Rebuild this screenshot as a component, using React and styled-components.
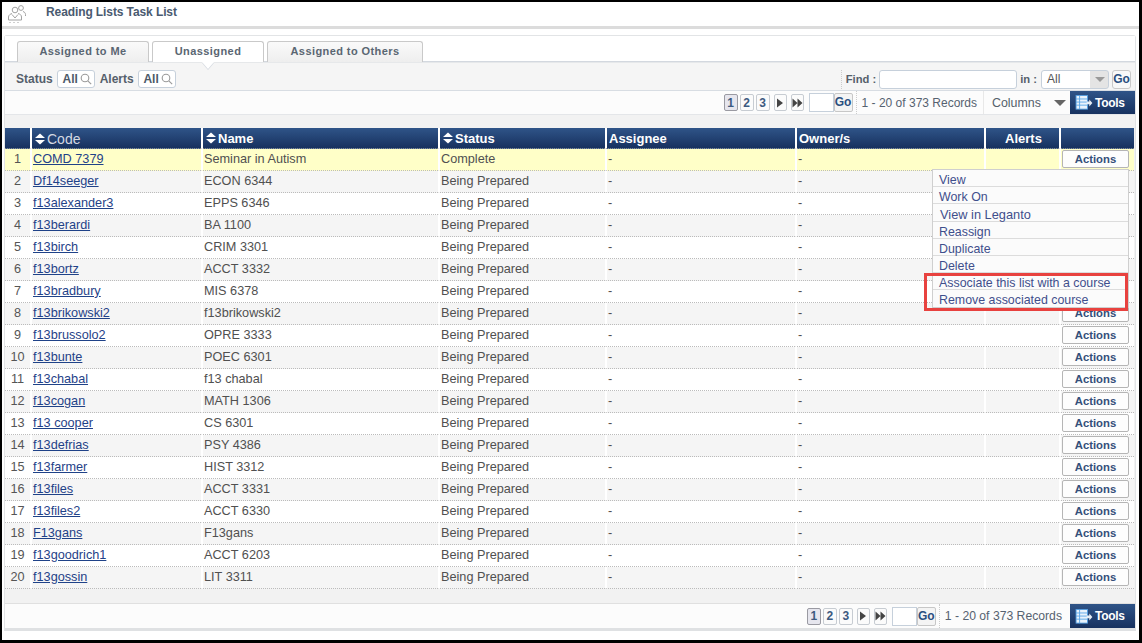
import React from 'react';
import styled, { createGlobalStyle } from 'styled-components';

const rows = [
  ['COMD 7379', 'Seminar in Autism', 'Complete'],
  ['Df14seeger', 'ECON 6344'],
  ['f13alexander3', 'EPPS 6346'],
  ['f13berardi', 'BA 1100'],
  ['f13birch', 'CRIM 3301'],
  ['f13bortz', 'ACCT 3332'],
  ['f13bradbury', 'MIS 6378'],
  ['f13brikowski2', 'f13brikowski2'],
  ['f13brussolo2', 'OPRE 3333'],
  ['f13bunte', 'POEC 6301'],
  ['f13chabal', 'f13 chabal'],
  ['f13cogan', 'MATH 1306'],
  ['f13 cooper', 'CS 6301'],
  ['f13defrias', 'PSY 4386'],
  ['f13farmer', 'HIST 3312'],
  ['f13files', 'ACCT 3331'],
  ['f13files2', 'ACCT 6330'],
  ['F13gans', 'F13gans'],
  ['f13goodrich1', 'ACCT 6203'],
  ['f13gossin', 'LIT 3311'],
];

const menuItems = [
  'View',
  'Work On',
  'View in Leganto',
  'Reassign',
  'Duplicate',
  'Delete',
  'Associate this list with a course',
  'Remove associated course',
];

// rows whose Actions button sits behind the open menu
const isUnderMenu = (index) => index >= 1 && index <= 6;

const SearchIcon = () => (
  <svg width="12" height="12" viewBox="0 0 12 12" fill="none" stroke="#9a9a9a" strokeWidth="1.1">
    <circle cx="5" cy="5" r="3.8" />
    <path d="M7.8 7.8 11.2 11.2" />
  </svg>
);

const SortIcon = () => (
  <svg width="12" height="12" viewBox="0 0 12 12" fill="#fff">
    <path d="M6 0.5 11 5H1Z" />
    <path d="M1 7H11L6 11.5Z" />
  </svg>
);

const ToolsIcon = () => (
  <svg width="18" height="15" viewBox="0 0 20 17">
    <rect x="1" y="0.5" width="13" height="15.5" fill="#e9f2fb" stroke="#4f9be0" />
    <path d="M1 4.5H14M1 8H14M1 11.5H14M5 1V16" stroke="#56a5e8" strokeWidth="1" />
    <path d="M13 7.500h3V5l3.500 4-3.500 4v-2.500h-3Z" fill="#e6edf5" />
  </svg>
);

const PeopleIcon = () => (
  <svg width="20" height="20" viewBox="0 0 20 20" fill="none" stroke="#a2a2a2" strokeWidth="1">
    <circle cx="8" cy="6" r="2.800" />
    <circle cx="14" cy="4" r="2.400" />
    <path d="M1.500 16v-3c0-2 2-3 3.500-3.500M11 9.500c2 .5 3.500 1.500 3.500 3.500v3" />
    <path d="M16 7.500c1.500.5 2.500 1.500 2.500 3V12" />
    <path d="M1.500 16h13M5 10.500 8 14l3-3.500" />
    <path d="M2 18.500h2M6 18.500h2M10 18.500h2" stroke="#cfcfcf" />
  </svg>
);

const Pager = ({ bottom }) => (
  <PagerWrap>
    <PageBtn $active>1</PageBtn>
    <PageBtn>2</PageBtn>
    <PageBtn>3</PageBtn>
    <ArrowBtn>
      <svg width="8" height="10" viewBox="0 0 8 10" fill="#444"><path d="M1 0.500 7 5 1 9.500Z" /></svg>
    </ArrowBtn>
    <ArrowBtn>
      <svg width="11" height="10" viewBox="0 0 11 10" fill="#444"><path d="M0.500 0.500 5.500 5 0.500 9.500ZM5.500 0.500 10.500 5 5.500 9.500Z" /></svg>
    </ArrowBtn>
    <PageInput />
    <GoBtn>Go</GoBtn>
    <Records $bottom={bottom}>1 - 20 of 373 Records</Records>
  </PagerWrap>
);

export default function App() {
  return (
    <Page>
      <GlobalStyle />
      <Header>
        <HeaderIcon><PeopleIcon /></HeaderIcon>
        <Title>Reading Lists Task List</Title>
      </Header>
      <Panel>
        <TabStrip>
          <Tab $width={132}>Assigned to Me</Tab>
          <Tab $width={112} $active>Unassigned</Tab>
          <Tab $width={156}>Assigned to Others</Tab>
        </TabStrip>
        <FilterBar>
          <FilterLabel>Status</FilterLabel>
          <FilterBox>All <SearchIcon /></FilterBox>
          <FilterLabel>Alerts</FilterLabel>
          <FilterBox>All <SearchIcon /></FilterBox>
          <FindWrap>
            <FindLabel>Find :</FindLabel>
            <FindInput />
            <FindLabel>in :</FindLabel>
            <FindSelect>
              All
              <SelectArrow />
            </FindSelect>
            <SmallGo>Go</SmallGo>
          </FindWrap>
        </FilterBar>
        <Toolbar>
          <Pager />
          <ColumnsBtn>Columns <ColumnsCaret /></ColumnsBtn>
          <ToolsBtn><ToolsIcon />Tools</ToolsBtn>
        </Toolbar>
        <TableArea>
          <Table>
            <colgroup>
              <col width="25" />
              <col width="171" />
              <col width="237" />
              <col width="167" />
              <col width="190" />
              <col width="189" />
              <col width="75" />
              <col width="75" />
            </colgroup>
            <thead>
              <tr>
                <Th />
                <Th $dim><SortIcon />Code</Th>
                <Th><SortIcon />Name</Th>
                <Th><SortIcon />Status</Th>
                <Th>Assignee</Th>
                <Th>Owner/s</Th>
                <Th $center>Alerts</Th>
                <Th />
              </tr>
            </thead>
            <tbody>
              {rows.map(([code, name, status], index) => (
                <Row key={code} $first={index === 0} $odd={index % 2 === 1}>
                  <NumCell>{index + 1}</NumCell>
                  <Td><CodeLink href="#">{code}</CodeLink></Td>
                  <Td>{name}</Td>
                  <Td>{status || 'Being Prepared'}</Td>
                  <Td>-</Td>
                  <Td>-</Td>
                  <Td />
                  <ActionCell>
                    {!isUnderMenu(index) && <ActionsBtn>Actions</ActionsBtn>}
                  </ActionCell>
                </Row>
              ))}
            </tbody>
          </Table>
          <Menu>
            {menuItems.map((item) => (
              <MenuItem key={item} $wide={item === 'View in Leganto'}>{item}</MenuItem>
            ))}
          </Menu>
          <Highlight />
        </TableArea>
        <BottomBar>
          <Pager bottom />
          <ToolsBtn><ToolsIcon />Tools</ToolsBtn>
        </BottomBar>
      </Panel>
    </Page>
  );
}

const GlobalStyle = createGlobalStyle`
  html, body {
    margin: 0;
    padding: 0;
    background: #000;
  }
  body {
    font-family: "Liberation Sans", Arial, sans-serif;
    overflow: hidden;
  }
`;

const Page = styled.div`
  box-sizing: border-box;
  width: 1137px;
  height: 638px;
  margin: 2px 0 0 2px;
  background: #fff;
`;

const Header = styled.div`
  display: flex;
  align-items: flex-start;
  height: 24px;
  border-bottom: 3px solid #dcdcdc;
`;

const HeaderIcon = styled.div`
  width: 44px;
  padding: 2px 0 0 5px;
  box-sizing: border-box;
`;

const Title = styled.div`
  padding-top: 2px;
  font-size: 12px;
  font-weight: bold;
  color: #4a5a70;
  line-height: 17px;
  letter-spacing: -0.1px;
`;

const Panel = styled.div`
  margin: 6px 3px 0 2px;
  height: 592px;
  display: flex;
  flex-direction: column;
  border: 1px solid #e2e4e6;
  border-bottom: 3px solid #dfe1e3;
  border-radius: 3px 3px 0 0;
  background: #f4f4f4;
`;

const TabStrip = styled.div`
  display: flex;
  gap: 3px;
  height: 26px;
  padding: 5px 0 0 12px;
  box-sizing: border-box;
  background: #fff;
  border-bottom: 1px solid #d3d8df;
`;

const Tab = styled.div`
  box-sizing: border-box;
  width: ${(p) => p.$width}px;
  height: 21px;
  font-size: 11px;
  font-weight: bold;
  line-height: 19px;
  letter-spacing: 0.42px;
  text-align: center;
  color: #5a6672;
  border: 1px solid #c9c9c9;
  border-bottom: 0;
  border-radius: 3px 3px 0 0;
  background: ${(p) => (p.$active ? '#fff' : 'linear-gradient(#fafafa, #eeeeee)')};
  position: relative;

  &::after {
    content: ${(p) => (p.$active ? "''" : 'none')};
    position: absolute;
    left: 50%;
    bottom: -7px;
    margin-left: -6px;
    border: 6px solid transparent;
    border-bottom: 0;
    border-top: 7px solid #fff;
    filter: drop-shadow(0 1px 0 #d3d8df);
  }
`;

const FilterBar = styled.div`
  display: flex;
  align-items: center;
  gap: 4.8px;
  height: 29px;
  padding: 5px 4px 0 11px;
  box-sizing: border-box;
  background: #f5f5f5;
  border-top: 1px solid #e6e8ea;
  border-bottom: 1px solid #d8dde3;
`;

const FilterLabel = styled.span`
  font-size: 12px;
  font-weight: bold;
  color: #555f6b;
`;

const FindLabel = styled(FilterLabel)`
  font-size: 11.2px;
`;

const FilterBox = styled.div`
  display: flex;
  align-items: center;
  gap: 2px;
  box-sizing: border-box;
  height: 18px;
  padding: 0 2px 0 4px;
  font-size: 12px;
  font-weight: bold;
  color: #4d5a68;
  background: #fff;
  border: 1px solid #c6d0db;
  border-radius: 3px;
`;

const FindWrap = styled.div`
  margin-left: auto;
  display: flex;
  align-items: center;
  gap: 3px;
  padding-left: 4px;
  border-left: 1px dotted #ccc;
`;

const FindInput = styled.div`
  box-sizing: border-box;
  width: 138px;
  height: 19px;
  background: #fff;
  border: 1px solid #c6d0db;
  border-radius: 3px;
`;

const FindSelect = styled.div`
  box-sizing: border-box;
  display: flex;
  align-items: center;
  justify-content: space-between;
  width: 68px;
  height: 19px;
  margin-left: 1px;
  padding-left: 5px;
  font-size: 12px;
  color: #555;
  background: linear-gradient(to left, #e4e4e4 18px, #fff 18px);
  border: 1px solid #c6d0db;
  border-radius: 3px;
`;

const SelectArrow = styled.span`
  margin-right: 3px;
  border: 5px solid transparent;
  border-top: 5px solid #999;
  border-bottom: 0;
`;

const SmallGo = styled.div`
  box-sizing: border-box;
  width: 19px;
  height: 19px;
  font-size: 12px;
  font-weight: bold;
  line-height: 17px;
  text-align: center;
  color: #2a4f7f;
  background: #f8f8f8;
  border: 1px solid #c9c9c9;
  border-radius: 3px;
`;

const Toolbar = styled.div`
  display: flex;
  align-items: center;
  justify-content: flex-end;
  height: 23px;
  flex-shrink: 0;
  background: #fcfcfc;
  border-bottom: 1px solid #e4e6e9;
`;

const PagerWrap = styled.div`
  display: flex;
  align-items: center;
  gap: 2px;
  height: 100%;
`;

const PageBtn = styled.div`
  box-sizing: border-box;
  display: flex;
  align-items: center;
  justify-content: center;
  width: 14px;
  height: 17px;
  font-size: 12px;
  font-weight: bold;
  color: #3d5a80;
  background: ${(p) => (p.$active ? '#e6e6ee' : '#fbfbfb')};
  border: 1px solid ${(p) => (p.$active ? '#9a9aa2' : '#c7ccd2')};
  border-radius: 2px;
`;

const ArrowBtn = styled(PageBtn)`
  width: 13px;
  margin-left: 2px;
`;

const PageInput = styled.div`
  box-sizing: border-box;
  width: 25px;
  height: 19px;
  margin-left: 3px;
  background: #fff;
  border: 1px solid #c6d0db;
`;

const GoBtn = styled.div`
  box-sizing: border-box;
  width: 19px;
  height: 19px;
  margin-left: -2px;
  font-size: 12px;
  font-weight: bold;
  line-height: 17px;
  text-align: center;
  color: #2a4f7f;
  background: #f4f4f4;
  border: 1px solid #c7c7c7;
  border-radius: 2px;
`;

const Records = styled.div`
  display: flex;
  align-items: center;
  height: 100%;
  margin-left: 1px;
  padding: 0 ${(p) => (p.$bottom ? 8 : 6)}px 0 5px;
  font-size: ${(p) => (p.$bottom ? 12.2 : 12)}px;
  color: #566270;
  white-space: nowrap;
  border-left: 1px dotted #ccc;
`;

const ColumnsBtn = styled.div`
  display: flex;
  align-items: center;
  height: 100%;
  box-sizing: border-box;
  width: 87px;
  padding-left: 8px;
  font-size: 12.4px;
  color: #555f6b;
  border-left: 1px solid #e8e8e8;
`;

const ColumnsCaret = styled.span`
  margin-left: 13px;
  border: 6px solid transparent;
  border-top: 6px solid #666;
  border-bottom: 0;
`;

const ToolsBtn = styled.div`
  display: flex;
  align-items: center;
  gap: 2px;
  box-sizing: border-box;
  width: 65px;
  height: 100%;
  padding-left: 5px;
  font-size: 12px;
  font-weight: bold;
  letter-spacing: -0.3px;
  color: #fff;
  background: linear-gradient(#2f5488, #17315f);
`;

const TableArea = styled.div`
  position: relative;
  flex: 1;
  padding-top: 13px;
  background: #f2f2f2;
`;

const Table = styled.table`
  table-layout: fixed;
  width: 1129px;
  border-collapse: separate;
  border-spacing: 0;
`;

const Th = styled.th`
  box-sizing: border-box;
  height: 21px;
  padding: 1px 0 0 2px;
  font-size: ${(p) => (p.$dim ? 14 : 13)}px;
  font-weight: ${(p) => (p.$dim ? 'normal' : 'bold')};
  text-align: ${(p) => (p.$center ? 'center' : 'left')};
  color: ${(p) => (p.$dim ? '#d4d9e2' : '#fff')};
  background: linear-gradient(#2f5488, #17315f);
  border-left: 2px solid #fff;
  border-bottom: 1px dotted #888;
  white-space: nowrap;

  &:first-child {
    border-left: 0;
  }

  svg {
    margin-right: 1px;
    vertical-align: -1px;
  }
`;

const Row = styled.tr`
  background: ${(p) => {
    if (p.$first) return '#ffffc8';
    return p.$odd ? '#f5f5f5' : '#fff';
  }};
`;

const Td = styled.td`
  box-sizing: border-box;
  height: 22px;
  padding: 0 0 1px 1px;
  font-size: 12.7px;
  color: #505050;
  border-left: 2px solid #fff;
  border-bottom: 1px dotted #bbb;
  white-space: nowrap;
`;

const NumCell = styled(Td)`
  border-left: 0;
  padding: 0 0 1px 0;
  text-align: center;
  color: #555;
`;

const ActionCell = styled(Td)`
  padding: 0 0 2px 1px;
`;

const CodeLink = styled.a`
  color: #1f4288;
  text-decoration: underline;
`;

const ActionsBtn = styled.div`
  box-sizing: border-box;
  width: 67px;
  height: 18px;
  font-size: 11.3px;
  font-weight: bold;
  line-height: 16px;
  text-align: center;
  color: #344f7a;
  background: #fdfdfd;
  border: 1px solid #b5b5b5;
  border-radius: 2px;
`;

const Menu = styled.div`
  position: absolute;
  top: 54px;
  left: 927px;
  width: 197px;
  box-sizing: border-box;
  background: #fbfbfb;
  border: 1px solid #cfcfcf;
`;

const MenuItem = styled.div`
  box-sizing: border-box;
  height: ${(p) => (p.$wide ? 18 : 17)}px;
  padding: ${(p) => (p.$wide ? 4 : 3)}px 0 0 ${(p) => (p.$wide ? 7 : 6)}px;
  font-size: ${(p) => (p.$wide ? 12.8 : 12.4)}px;
  line-height: 14px;
  color: #3f4f8c;
  white-space: nowrap;
  border-bottom: 1px solid #dcdcdc;

  &:last-child {
    border-bottom: 0;
  }
`;

const Highlight = styled.div`
  position: absolute;
  top: 158px;
  left: 919px;
  width: 204px;
  height: 38px;
  box-sizing: border-box;
  border: 3px solid #e8423f;
`;

const BottomBar = styled.div`
  display: flex;
  align-items: center;
  justify-content: flex-end;
  height: 24px;
  flex-shrink: 0;
  background: #fcfcfc;
  border-top: 1px solid #e0e0e0;
`;
